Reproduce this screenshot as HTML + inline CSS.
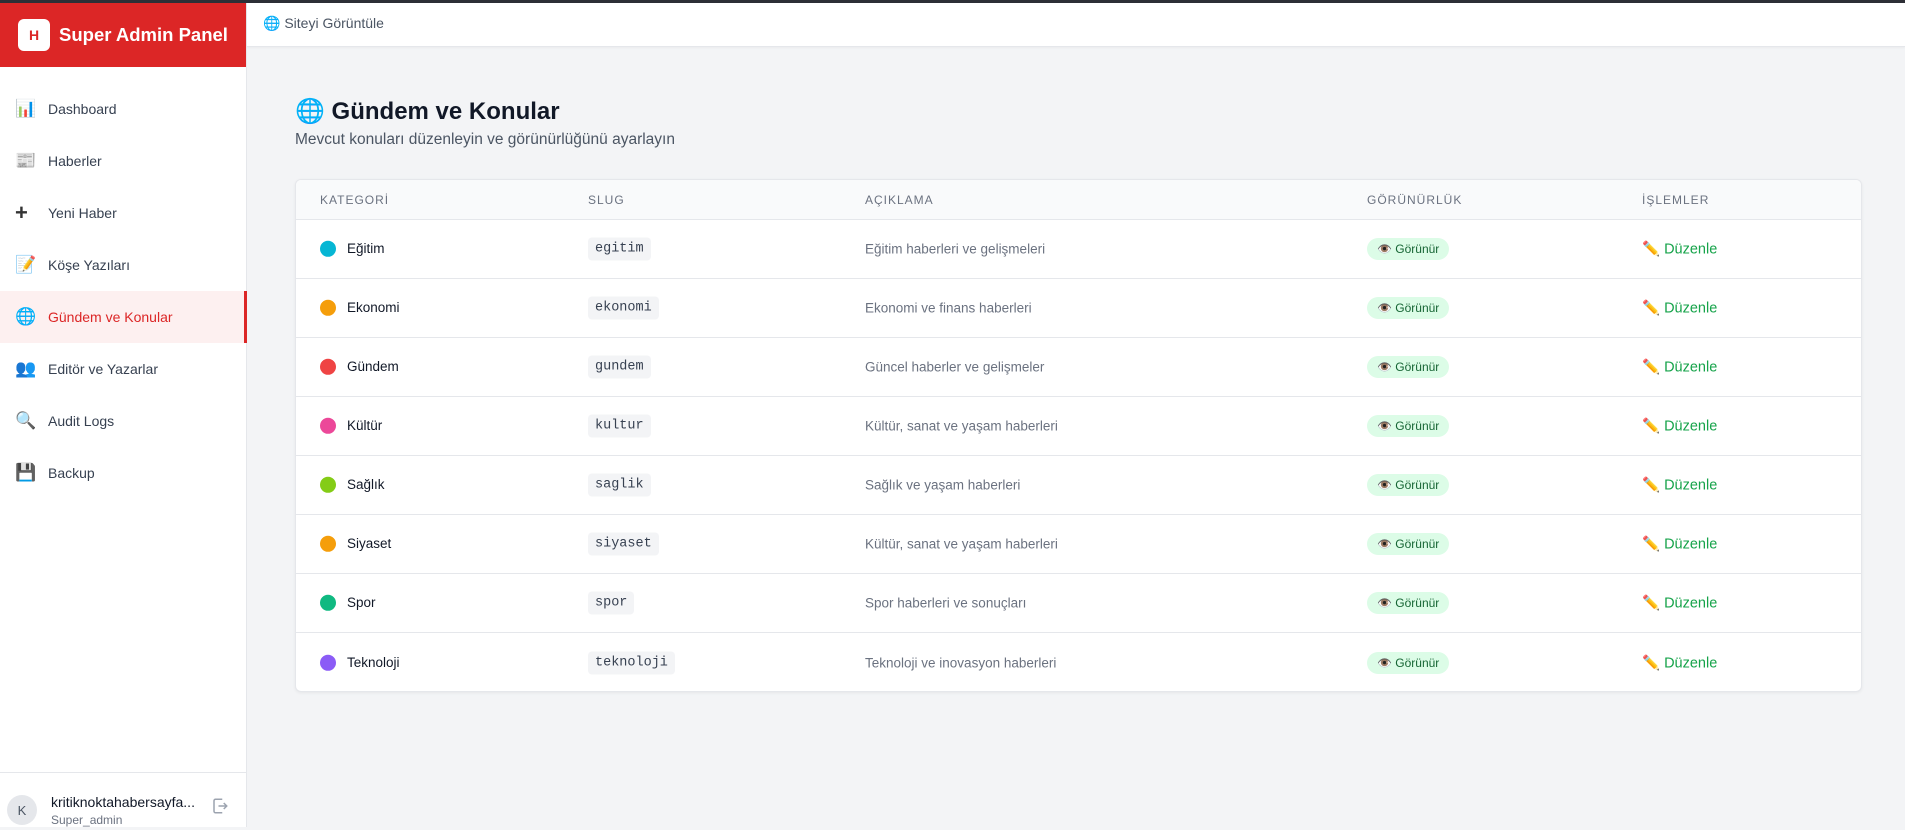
<!DOCTYPE html>
<html><head><meta charset="utf-8"><style>
*{box-sizing:border-box;margin:0;padding:0}
body{width:1905px;height:827px;overflow:hidden;background:#f3f4f6;font-family:"Liberation Sans","Noto Sans CJK JP",sans-serif;color:#111827;position:relative}
.topline{position:absolute;left:0;top:0;width:1905px;height:3px;background:#2d2f36}
.side{position:absolute;left:0;top:3px;width:247px;height:824px;background:#fff;border-right:1px solid #e5e7eb}
.brand{height:64px;background:#dc2626;display:flex;align-items:center;padding-left:18px}
.logo{width:32px;height:32px;background:#fff;border-radius:6px;color:#dc2626;font-weight:bold;font-size:14px;display:flex;align-items:center;justify-content:center}
.brand span{color:#fff;font-weight:bold;font-size:18.5px;margin-left:9px}
.nav{position:absolute;top:80px;left:0;width:247px}
.item{height:52px;display:flex;align-items:center;padding-left:15px;font-size:14px;color:#374151}
.item i{font-style:normal;width:33px;font-size:17px}
.item.act{background:#fdf0f0;color:#dc2626;border-right:3px solid #dc2626}
.foot{position:absolute;left:0;top:769px;width:247px;height:58px;border-top:1px solid #e5e7eb}
.av{position:absolute;left:7px;top:22px;width:30px;height:30px;border-radius:50%;background:#e5e7eb;color:#4b5563;font-size:13px;display:flex;align-items:center;justify-content:center}
.un{position:absolute;left:51px;top:21px;font-size:14px;color:#111827}
.ur{position:absolute;left:51px;top:40px;font-size:12px;color:#6b7280}
.topbar{position:absolute;left:247px;top:3px;width:1658px;height:44px;background:#fff;border-bottom:1px solid #e5e7eb;box-shadow:0 1px 2px rgba(0,0,0,.04);font-size:14px;color:#4b5563;padding:12px 0 0 16px}
h1{position:absolute;left:295px;top:97px;font-size:24px;font-weight:bold;color:#111827}
.sub{position:absolute;left:295px;top:131px;font-size:15.5px;color:#4b5563}
.tbl{position:absolute;left:295px;top:179px;width:1567px;height:513px;background:#fff;border:1px solid #e5e7eb;border-radius:6px;box-shadow:0 1px 3px rgba(0,0,0,.06);overflow:hidden}
.hd{height:40px;background:#f9fafb;border-bottom:1px solid #e5e7eb;position:relative;font-size:12px;letter-spacing:1px;color:#6b7280}
.hd span,.row span{position:absolute;top:50%;transform:translateY(-50%)}
.row{height:59px;border-bottom:1px solid #e5e7eb;position:relative;font-size:13.5px}
.row:last-child{border-bottom:none}
.c1{left:24px}.c2{left:292px}.c3{left:569px}.c4{left:1071px}.c5{left:1346px}
.dot{display:inline-block;width:16px;height:16px;border-radius:50%;vertical-align:middle;margin-right:11px}
.slug{font-family:"Liberation Mono",monospace;font-size:13.5px;color:#374151;background:#f3f4f6;border-radius:4px;padding:4px 7px}
.desc{color:#6b7280;font-size:13.5px}
.badge{background:#dcfce7;color:#166534;font-size:12px;border-radius:12px;padding:4px 10px}
.ed{color:#16a34a;font-size:14.5px}
</style></head><body>
<div class="topline"></div>
<div class="side">
 <div class="brand"><div class="logo">H</div><span>Super Admin Panel</span></div>
 <div class="nav">
  <div class="item"><i>📊</i>Dashboard</div>
  <div class="item"><i>📰</i>Haberler</div>
  <div class="item"><i style="font-weight:bold;font-size:22px;color:#333">+</i>Yeni Haber</div>
  <div class="item"><i>📝</i>Köşe Yazıları</div>
  <div class="item act"><i>🌐</i>Gündem ve Konular</div>
  <div class="item"><i>👥</i>Editör ve Yazarlar</div>
  <div class="item"><i>🔍</i>Audit Logs</div>
  <div class="item"><i>💾</i>Backup</div>
 </div>
 <div class="foot"><div class="av">K</div><div class="un">kritiknoktahabersayfa...</div><div class="ur">Super_admin</div>
 <svg style="position:absolute;left:211px;top:24px" width="18" height="18" viewBox="0 0 24 24" fill="none" stroke="#9ca3af" stroke-width="2"><path d="M15 3H6a2 2 0 0 0-2 2v14a2 2 0 0 0 2 2h9M10 12h11M17 8l4 4-4 4"/></svg></div>
</div>
<div class="topbar">🌐 Siteyi Görüntüle</div>
<h1>🌐 Gündem ve Konular</h1>
<div class="sub">Mevcut konuları düzenleyin ve görünürlüğünü ayarlayın</div>
<div class="tbl">
 <div class="hd"><span class="c1">KATEGORİ</span><span class="c2">SLUG</span><span class="c3">AÇIKLAMA</span><span class="c4">GÖRÜNÜRLÜK</span><span class="c5">İŞLEMLER</span></div>
 <div class="row"><span class="c1"><i class="dot" style="background:#06b6d4"></i>Eğitim</span><span class="c2 slug">egitim</span><span class="c3 desc">Eğitim haberleri ve gelişmeleri</span><span class="c4 badge">👁️ Görünür</span><span class="c5 ed">✏️ Düzenle</span></div>
 <div class="row"><span class="c1"><i class="dot" style="background:#f59e0b"></i>Ekonomi</span><span class="c2 slug">ekonomi</span><span class="c3 desc">Ekonomi ve finans haberleri</span><span class="c4 badge">👁️ Görünür</span><span class="c5 ed">✏️ Düzenle</span></div>
 <div class="row"><span class="c1"><i class="dot" style="background:#ef4444"></i>Gündem</span><span class="c2 slug">gundem</span><span class="c3 desc">Güncel haberler ve gelişmeler</span><span class="c4 badge">👁️ Görünür</span><span class="c5 ed">✏️ Düzenle</span></div>
 <div class="row"><span class="c1"><i class="dot" style="background:#ec4899"></i>Kültür</span><span class="c2 slug">kultur</span><span class="c3 desc">Kültür, sanat ve yaşam haberleri</span><span class="c4 badge">👁️ Görünür</span><span class="c5 ed">✏️ Düzenle</span></div>
 <div class="row"><span class="c1"><i class="dot" style="background:#84cc16"></i>Sağlık</span><span class="c2 slug">saglik</span><span class="c3 desc">Sağlık ve yaşam haberleri</span><span class="c4 badge">👁️ Görünür</span><span class="c5 ed">✏️ Düzenle</span></div>
 <div class="row"><span class="c1"><i class="dot" style="background:#f59e0b"></i>Siyaset</span><span class="c2 slug">siyaset</span><span class="c3 desc">Kültür, sanat ve yaşam haberleri</span><span class="c4 badge">👁️ Görünür</span><span class="c5 ed">✏️ Düzenle</span></div>
 <div class="row"><span class="c1"><i class="dot" style="background:#10b981"></i>Spor</span><span class="c2 slug">spor</span><span class="c3 desc">Spor haberleri ve sonuçları</span><span class="c4 badge">👁️ Görünür</span><span class="c5 ed">✏️ Düzenle</span></div>
 <div class="row"><span class="c1"><i class="dot" style="background:#8b5cf6"></i>Teknoloji</span><span class="c2 slug">teknoloji</span><span class="c3 desc">Teknoloji ve inovasyon haberleri</span><span class="c4 badge">👁️ Görünür</span><span class="c5 ed">✏️ Düzenle</span></div>
</div>
</body></html>
